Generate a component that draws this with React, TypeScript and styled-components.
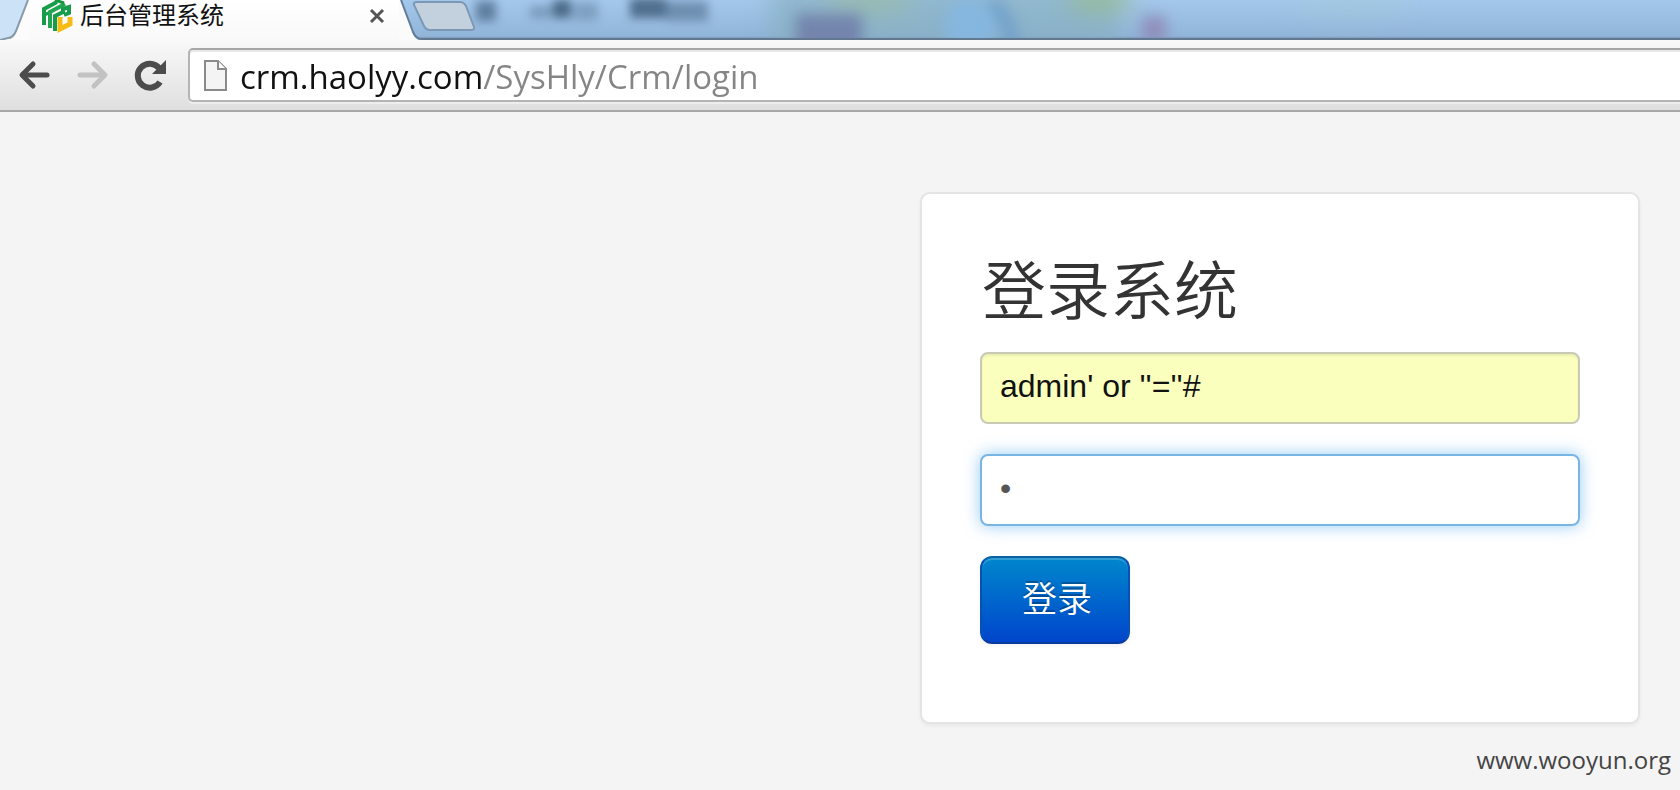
import React, { useState } from 'react';
import styled, { createGlobalStyle, css } from 'styled-components';

const uiFont = '"Open Sans", "Noto Sans CJK SC", sans-serif';
const formFont = '"Liberation Sans", "Noto Sans CJK SC", sans-serif';

const GlobalStyle = createGlobalStyle`
  *, *::before, *::after { box-sizing: border-box; }
  body { margin: 0; background: #f4f4f4; }
  button { padding: 0; border: 0; background: none; cursor: pointer; }
  svg { display: block; }
`;

const Page = styled.div`
  display: flex;
  flex-direction: column;
  min-height: 100vh;
`;

const TabStrip = styled.header`
  position: relative;
  display: flex;
  height: 40px;
  overflow: hidden;
  background: linear-gradient(#a4c8ec, #92b5da 36px, #7f9dbd 38px, #62788f 38px);
`;

const Backdrop = styled.svg`
  position: absolute;
  top: 0;
  left: 0;
`;

const BlurLayer = styled.g<{ $radius: number }>`
  filter: blur(${({ $radius }) => $radius}px);
`;

const TabEdge = styled.svg`
  position: relative;
  flex: none;
`;

const Tab = styled.div`
  position: relative;
  display: flex;
  align-items: flex-start;
  flex: none;
  width: 370px;
  padding: 0 14px 0 12px;
  background: linear-gradient(#ffffff, #f9f9f9);
`;

const TabTitle = styled.span`
  flex: 1;
  margin-left: 7px;
  font: 24px/32px ${formFont};
  color: #111;
`;

const CloseButton = styled.button`
  margin-top: 8px;
`;

const NewTabButton = styled.button`
  position: relative;
  align-self: flex-start;
`;

const Toolbar = styled.nav`
  display: flex;
  align-items: center;
  height: 72px;
  padding-left: 15px;
  border-bottom: 2px solid #a8a8a8;
  background: linear-gradient(#f9f9f9, #dfdfdf);
`;

const NavButton = styled.button`
  flex: none;
  width: 36px;
  height: 36px;
  margin-right: 22px;
`;

const AddressBar = styled.div`
  display: flex;
  align-items: center;
  flex: 1;
  height: 54px;
  margin-left: -1px;
  padding-left: 14px;
  border: 2px solid #b4b4b4;
  border-top-color: #a6a8a6;
  border-right: 0;
  border-radius: 5px 0 0 5px;
  background: #fff;
  box-shadow: inset 0 2px 0 #e8e8e8, 0 2px 0 #eeeeee;
`;

const AddressInput = styled.input`
  flex: 1;
  min-width: 0;
  height: 48px;
  margin-left: 13px;
  padding: 2px 0 0;
  border: 0;
  outline: 0;
  font: 33px/46px ${uiFont};
  color: #111;
  /* host name dark, path grey */
  background: linear-gradient(to right, #111 243px, #858585 243px);
  background-clip: text;
  -webkit-text-fill-color: transparent;
`;

const Main = styled.main`
  flex: 1;
  padding: 80px 40px 0;
`;

const LoginCard = styled.form`
  max-width: 720px;
  margin-left: auto;
  padding: 58px 58px 78px;
  border: 2px solid #e4e4e4;
  border-radius: 10px;
  background: #fff;
  box-shadow: 0 2px 4px rgba(0, 0, 0, 0.05);
`;

const Heading = styled.h1`
  margin: 0 0 20px;
  padding-left: 2px;
  font: 350 64px/80px ${formFont};
  color: #333;
`;

const Field = styled.input<{ $tone: 'filled' | 'active' }>`
  display: block;
  width: 100%;
  height: 72px;
  margin-bottom: 30px;
  padding: 0 18px 4px;
  border: 2px solid;
  border-radius: 8px;
  outline: 0;
  font: 32px/40px ${formFont};
  ${({ $tone }) =>
    $tone === 'filled'
      ? css`
          color: #111;
          border-color: #c8cab4;
          background: #faffbd;
          box-shadow: inset 0 2px 2px rgba(0, 0, 0, 0.07);
        `
      : css`
          color: #555;
          border-color: #79b5e4;
          background: #fff;
          box-shadow: 0 0 16px rgba(82, 168, 236, 0.6);
        `}
`;

const SubmitButton = styled.button`
  display: block;
  width: 150px;
  height: 88px;
  padding-left: 4px;
  border: 2px solid #0a50a8;
  border-color: #0a62a4 #0852b4 #0a3c9c;
  border-radius: 12px;
  background: linear-gradient(#0088cc, #0044cc);
  background-origin: border-box;
  box-shadow: inset 0 2px 0 rgba(255, 255, 255, 0.2), 0 2px 4px rgba(0, 0, 0, 0.05);
  font: 350 35px/48px ${formFont};
  color: #fff;
  text-shadow: 0 -2px 0 rgba(0, 0, 0, 0.25);
`;

const Credit = styled.footer`
  padding: 19px 9px 13px;
  text-align: right;
  font: 24px/34px ${uiFont};
  color: #444;
`;

const GlassBackdrop = () => (
  <Backdrop width="1680" height="38" aria-hidden="true">
    <BlurLayer $radius={5} fill="#36526f">
      <rect x="476" y="1" width="20" height="20" opacity="0.6" />
      <rect x="530" y="6" width="22" height="12" opacity="0.35" />
      <rect x="553" y="0" width="18" height="18" opacity="0.8" />
      <rect x="574" y="2" width="24" height="18" opacity="0.3" />
      <rect x="630" y="-2" width="36" height="20" opacity="0.75" />
      <rect x="666" y="1" width="42" height="20" opacity="0.45" />
    </BlurLayer>
    <BlurLayer $radius={12}>
      <rect x="770" y="-20" width="350" height="70" fill="#84aeba" opacity="0.6" />
      <ellipse cx="870" cy="0" rx="44" ry="12" fill="#9fbd9c" opacity="0.7" />
      <ellipse cx="1100" cy="-2" rx="34" ry="14" fill="#97bb8d" opacity="0.8" />
      <ellipse cx="1350" cy="4" rx="60" ry="14" fill="#a0cbd2" opacity="0.4" />
    </BlurLayer>
    <BlurLayer $radius={7}>
      <rect x="796" y="14" width="66" height="40" fill="#7180a8" opacity="0.9" />
      <ellipse cx="970" cy="26" rx="26" ry="28" fill="#85b8e3" opacity="0.8" />
      <path d="M992 2q16 14 22 46" fill="none" stroke="#6799ca" strokeWidth="12" opacity="0.8" />
      <rect x="1142" y="16" width="24" height="26" fill="#8d85b2" opacity="0.8" />
    </BlurLayer>
  </Backdrop>
);

const Logo = () => (
  <svg width="32" height="33" viewBox="0 0 32 33" aria-hidden="true" fill="none" strokeWidth="4">
    <path d="M3 25V9L16 2" stroke="#169d4b" />
    <path d="M3 15l7-3" stroke="#169d4b" strokeWidth="3" />
    <path d="M9 28V12L24 4" stroke="#20a650" />
    <path d="M14 0l9 3" stroke="#14963f" strokeWidth="3" />
    <path d="M14 31V16L22 12V9L28 7V13L23 15" stroke="#169d4b" />
    <path d="M19 17V29L29 24V17" stroke="#f8bb16" strokeWidth="5" />
  </svg>
);

const App: React.FC = () => {
  const [address, setAddress] = useState('crm.haolyy.com/SysHly/Crm/login');
  const [user, setUser] = useState("admin' or ''=''#");
  const [password, setPassword] = useState('1');

  return (
    <Page>
      <GlobalStyle />
      <TabStrip>
        <GlassBackdrop />
        <TabEdge width="29" height="40" aria-hidden="true">
          <path d="M0 0H29V40H0z" fill="#fcfcfc" />
          <path d="M0 0H28L16 31Q13 38 8 38L0 40z" fill="#cce2f6" />
          <path d="M28 0 16 31Q13 38 8 38L0 40" fill="none" stroke="#8799aa" strokeWidth="2" />
        </TabEdge>
        <Tab>
          <Logo />
          <TabTitle>后台管理系统</TabTitle>
          <CloseButton type="button" aria-label="关闭标签页">
            <svg width="16" height="16" viewBox="0 0 16 16">
              <path d="m2 2 12 12M14 2 2 14" stroke="#555" strokeWidth="3" />
            </svg>
          </CloseButton>
        </Tab>
        <TabEdge width="22" height="40" aria-hidden="true">
          <path d="M0 0H2L14 32Q17 39 22 39V40H0z" fill="#fbfbfb" />
          <path d="M2 0 14 32Q17 39 22 39" fill="none" stroke="#5f7c99" strokeWidth="2" />
        </TabEdge>
        <NewTabButton type="button" aria-label="新标签页">
          <svg width="56" height="34" viewBox="421 0 56 34" style={{ overflow: 'visible' }}>
            <path
              d="M417 2H460Q464 2 466 6L474 27Q475 30 471 30H430Q426 30 424 26L414 5Q413 2 417 2z"
              fill="#c3d1df"
              stroke="#7d98b5"
              strokeWidth="2"
            />
          </svg>
        </NewTabButton>
      </TabStrip>

      <Toolbar>
        <NavButton type="button" aria-label="后退">
          <svg width="36" height="36" viewBox="0 0 36 36" fill="none" stroke="#4c4c4c" strokeWidth="5">
            <path d="M32 18H8" strokeLinecap="round" />
            <path d="M18 7 7 18l11 11" strokeLinecap="round" strokeLinejoin="round" />
          </svg>
        </NavButton>
        <NavButton type="button" aria-label="前进">
          <svg width="36" height="36" viewBox="0 0 36 36" fill="none" stroke="#c2c2c2" strokeWidth="5">
            <path d="M7 18H30" strokeLinecap="round" />
            <path d="M21 7 32 18 21 29" strokeLinecap="round" strokeLinejoin="round" />
          </svg>
        </NavButton>
        <NavButton type="button" aria-label="重新加载">
          <svg width="36" height="36" viewBox="0 0 36 36">
            <path d="M29 25A12 12 0 1 1 28 11" fill="none" stroke="#4c4c4c" strokeWidth="6" />
            <path d="M35 3V17H21z" fill="#4c4c4c" />
          </svg>
        </NavButton>
        <AddressBar>
          <svg width="23" height="31" viewBox="0 0 23 31" aria-hidden="true">
            <path d="M1 1H14L22 9V30H1z" fill="#f4f4f4" stroke="#8a8a8a" strokeWidth="2" />
            <path d="M14 1V9H22" fill="#fff" stroke="#8a8a8a" strokeWidth="2" />
          </svg>
          <AddressInput
            aria-label="地址"
            spellCheck={false}
            value={address}
            onChange={(e) => setAddress(e.target.value)}
          />
        </AddressBar>
      </Toolbar>

      <Main>
        <LoginCard onSubmit={(e) => e.preventDefault()}>
          <Heading>登录系统</Heading>
          <Field
            $tone="filled"
            type="text"
            aria-label="用户名"
            spellCheck={false}
            value={user}
            onChange={(e) => setUser(e.target.value)}
          />
          <Field
            $tone="active"
            type="password"
            aria-label="密码"
            value={password}
            onChange={(e) => setPassword(e.target.value)}
          />
          <SubmitButton type="submit">登录</SubmitButton>
        </LoginCard>
      </Main>
      <Credit>www.wooyun.org</Credit>
    </Page>
  );
};

export default App;
